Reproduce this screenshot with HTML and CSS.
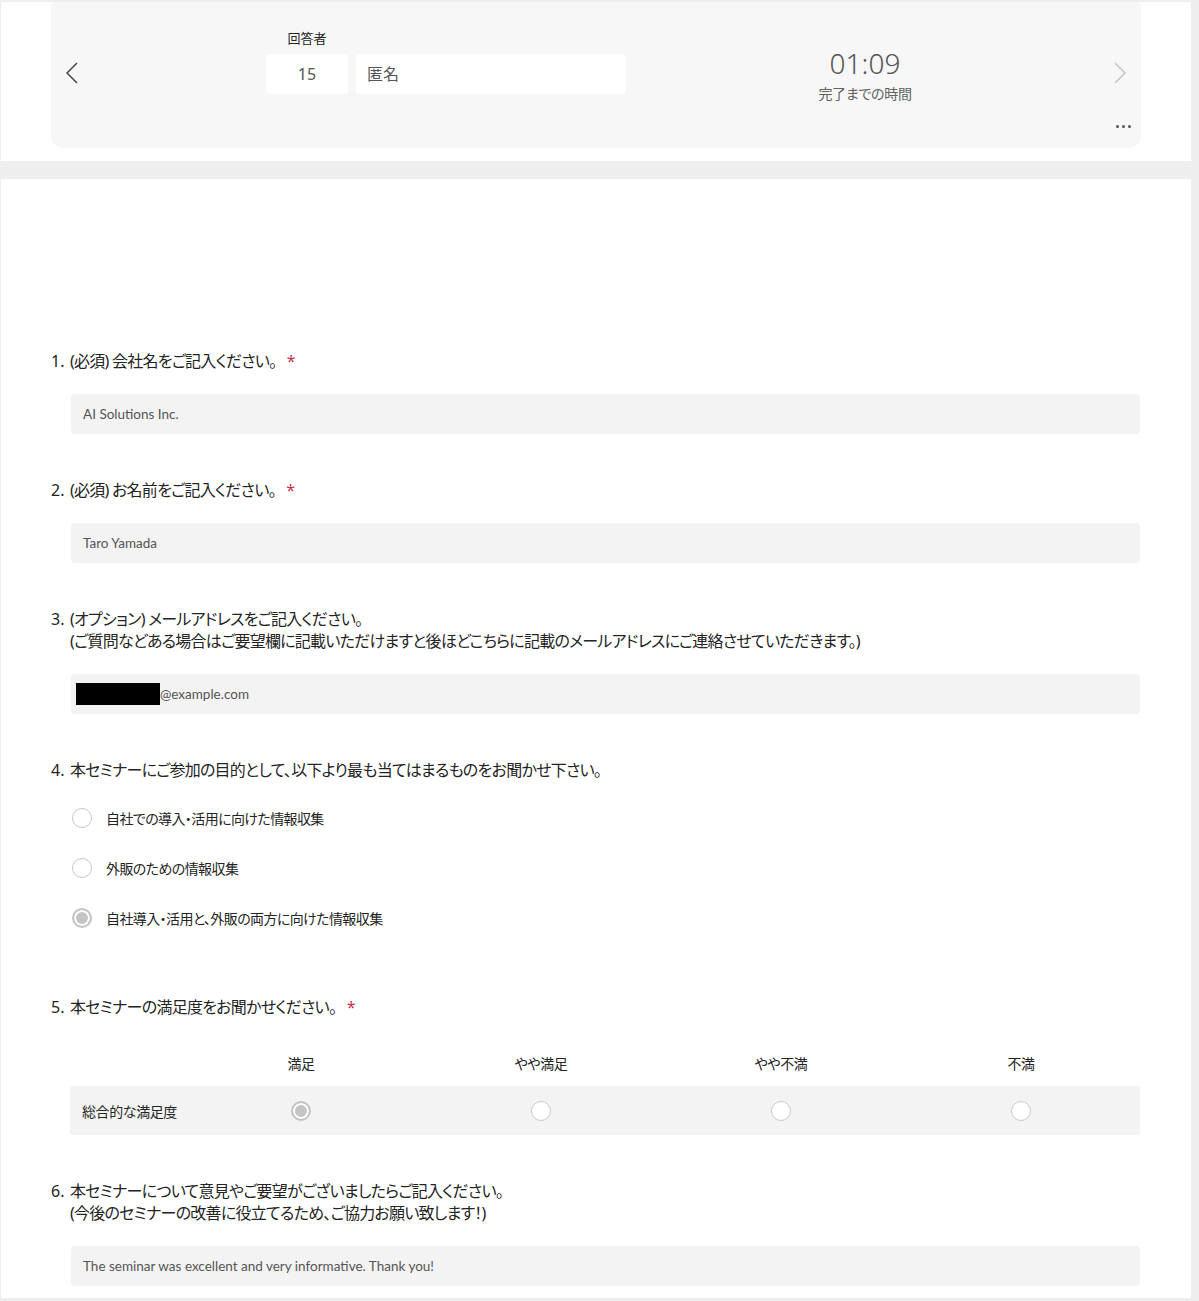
FILE: index.html
```html
<!DOCTYPE html>
<html lang="ja">
<head>
  <meta charset="UTF-8">
  <title>回答の表示</title>
  <link rel="stylesheet" href="styles.css">
</head>
<body>
  <div class="page">
    <header class="top">
      <div class="resp-card">
        <button class="nav-btn prev" aria-label="前へ">
          <svg width="12" height="22" viewBox="0 0 12 22"><path d="M11 1 L1 11 L11 21" fill="none" stroke="#444" stroke-width="1.5"/></svg>
        </button>
        <div class="respondent">
          <div class="resp-label">回答者</div>
          <div class="resp-fields">
            <div class="field num">15</div>
            <div class="field name">匿名</div>
          </div>
        </div>
        <div class="timer">
          <div class="time">01:09</div>
          <div class="time-label">完了までの時間</div>
        </div>
        <button class="nav-btn next" aria-label="次へ">
          <svg width="12" height="22" viewBox="0 0 12 22"><path d="M1 1 L11 11 L1 21" fill="none" stroke="#c4c4c4" stroke-width="1.5"/></svg>
        </button>
        <div class="more"><span></span><span></span><span></span></div>
      </div>
    </header>

    <main class="form">
      <section class="question q1">
        <h3 class="q-title"><span class="num">1.</span><span class="txt">(必須) 会社名をご記入ください。 <span class="req">*</span></span></h3>
        <div class="answer">AI Solutions Inc.</div>
      </section>

      <section class="question">
        <h3 class="q-title"><span class="num">2.</span><span class="txt">(必須) お名前をご記入ください。 <span class="req">*</span></span></h3>
        <div class="answer">Taro Yamada</div>
      </section>

      <section class="question">
        <h3 class="q-title"><span class="num">3.</span><span class="txt">(オプション) メールアドレスをご記入ください。<br>(ご質問などある場合はご要望欄に記載いただけますと後ほどこちらに記載のメールアドレスにご連絡させていただきます。)</span></h3>
        <div class="answer email"><span class="redact"></span>@example.com</div>
      </section>

      <section class="question">
        <h3 class="q-title"><span class="num">4.</span><span class="txt">本セミナーにご参加の目的として、以下より最も当てはまるものをお聞かせ下さい。</span></h3>
        <ul class="choices">
          <li><span class="radio"></span>自社での導入・活用に向けた情報収集</li>
          <li><span class="radio"></span>外販のための情報収集</li>
          <li><span class="radio checked"></span>自社導入・活用と、外販の両方に向けた情報収集</li>
        </ul>
      </section>

      <section class="question q5">
        <h3 class="q-title"><span class="num">5.</span><span class="txt">本セミナーの満足度をお聞かせください。 <span class="req">*</span></span></h3>
        <div class="likert">
          <div class="likert-head">
            <div></div>
            <div>満足</div>
            <div>やや満足</div>
            <div>やや不満</div>
            <div>不満</div>
          </div>
          <div class="likert-row">
            <div class="row-label">総合的な満足度</div>
            <div><span class="radio checked"></span></div>
            <div><span class="radio"></span></div>
            <div><span class="radio"></span></div>
            <div><span class="radio"></span></div>
          </div>
        </div>
      </section>

      <section class="question">
        <h3 class="q-title"><span class="num">6.</span><span class="txt">本セミナーについて意見やご要望がございましたらご記入ください。<br>(今後のセミナーの改善に役立てるため、ご協力お願い致します！)</span></h3>
        <div class="answer">The seminar was excellent and very informative. Thank you!</div>
      </section>
    </main>
  </div>
</body>
</html>
```

FILE: styles.css
```css
* { margin: 0; padding: 0; box-sizing: border-box; }
body {
  background: #eeeeee;
  font-family: "Noto Sans", "Noto Sans CJK JP", sans-serif;
  font-feature-settings: "palt";
  color: #242424;
}
.page { width: 1190px; margin-left: 1px; padding-top: 2px; }

/* header with respondent info */
.top { background: #fff; height: 159px; padding: 0 50px; }
.resp-card {
  position: relative;
  display: flex;
  align-items: flex-start;
  height: 146px;
  background: #f7f7f7;
  border-radius: 4px 4px 12px 12px;
  padding-left: 15px;
}
.nav-btn { background: none; border: none; margin-top: 60px; display: block; }
.nav-btn svg { display: block; }
.respondent { margin-left: 188px; margin-top: 27px; }
.resp-label { font-size: 13px; line-height: 18px; text-align: center; width: 82px; color: #242424; }
.resp-fields { display: flex; gap: 8px; margin-top: 7px; }
.field { background: #fff; height: 40px; border-radius: 4px; font-size: 16px; line-height: 40px; color: #555; }
.field.num { width: 82px; text-align: center; }
.field.name { width: 270px; padding-left: 11px; }
.timer { width: 120px; margin-left: 179px; margin-top: 43px; text-align: center; color: #555; }
.time { font-size: 28px; line-height: 36px; font-weight: 300; }
.time-label { font-size: 14px; line-height: 20px; margin-top: 3px; color: #616161; letter-spacing: -0.3px; }
.next { margin-left: 189px; }
.more { position: absolute; right: 10px; bottom: 20px; display: flex; gap: 3px; }
.more span { width: 3px; height: 3px; border-radius: 50%; background: #555; }

/* form body */
.form { background: #fff; margin-top: 18px; padding: 171px 51px 12px 50px; }
.question { margin-top: 45px; }
.question.q1 { margin-top: 0; }
.question.q5 { margin-top: 53px; }
.q-title { font-size: 16px; line-height: 22px; font-weight: 400; color: #242424; display: flex; }
.q-title .num { flex: none; width: 19px; }
.q-title .txt { letter-spacing: -0.75px; }
.req { color: #c4314b; margin-left: 7px; letter-spacing: 0; }
.answer {
  margin: 22px 0 0 20px;
  height: 40px;
  background: #f3f3f3;
  border-radius: 4px;
  padding-left: 12px;
  font-family: "Lato", "Noto Sans CJK JP", sans-serif;
  font-size: 13.5px;
  line-height: 40px;
  color: #555;
}
.answer.email { padding-left: 5px; display: flex; align-items: center; }
.redact { display: inline-block; width: 84px; height: 22px; background: #000; }

.choices { list-style: none; margin: 12px 0 0 21px; }
.choices li { display: flex; align-items: center; height: 50px; font-size: 14px; color: #242424; letter-spacing: -0.6px; }
.choices .radio { margin-right: 14px; }

.radio {
  display: inline-block;
  flex: none;
  width: 20px;
  height: 20px;
  border-radius: 50%;
  border: 1px solid #c8c8c8;
  background: #fff;
}
.radio.checked {
  border: 2px solid #c4c4c4;
  background: #c4c4c4;
  box-shadow: inset 0 0 0 2px #fff;
}

.likert { margin: 22px 0 0 19px; }
.likert-head, .likert-row { display: grid; grid-template-columns: 111px repeat(4, 240px); }
.likert-head { height: 46px; align-items: center; font-size: 14px; letter-spacing: -0.4px; }
.likert-head div { text-align: center; }
.likert-row { height: 49px; align-items: center; background: #f3f3f3; border-radius: 2px; }
.likert-row div { text-align: center; display: flex; justify-content: center; }
.likert-row .row-label { justify-content: flex-start; padding-left: 12px; font-size: 14px; white-space: nowrap; letter-spacing: -0.4px; }
```
